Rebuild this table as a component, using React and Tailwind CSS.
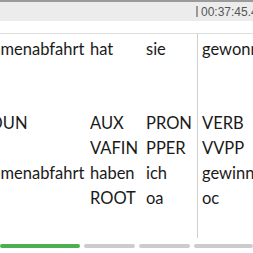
export default function App() {
  const rows = [
    [["Damenabfahrt", "ml-[-20px]"], "hat", "sie", "gewonnen"],
    [["", ""], "", "", ""],
    [["", ""], "", "", ""],
    [["NOUN", "ml-[-23px]"], "AUX", "PRON", "VERB"],
    [["NN", "ml-[-26px]"], "VAFIN", "PPER", "VVPP"],
    [["Damenabfahrt", "ml-[-20px]"], "haben", "ich", "gewinnen"],
    [["sb", "ml-[-18px]"], "ROOT", "oa", "oc"],
  ];
  return (
    <div className="w-[253px] h-[253px] overflow-hidden bg-white relative" style={{ fontFamily: "Lato, 'Noto Sans', sans-serif" }}>
      <div className="h-[2px] bg-[#9b9b9b]" />
      <div className="h-[19px] bg-[#ececec] flex items-center">
        <div className="ml-[196px] flex items-center">
          <div className="w-[2px] h-[11px] bg-[#9a9a9a]" />
          <span className="ml-[3px] text-[12px] leading-none text-[#555] whitespace-nowrap" style={{ fontFamily: "'Liberation Sans', Arial, sans-serif" }}>00:37:45.4</span>
        </div>
      </div>
      <div className="h-[12px]" />
      <div className="h-[1px] bg-[#dedede]" />
      <div className="relative h-[204px]">
        <div className="absolute left-[197px] top-0 bottom-0 w-[1px] bg-[#cfcfcf]" />
        <div className="pt-[3px]">
          {rows.map((r, i) => (
            <div key={i} className="flex h-[24.8px] items-center text-[16.5px] text-[#1a1a1a] whitespace-nowrap">
              <div className="w-[90px] shrink-0 overflow-hidden">
                <div className={r[0][1]}>{r[0][0] || "\u00a0"}</div>
              </div>
              <div className="w-[56px] shrink-0">{r[1]}</div>
              <div className="w-[56px] shrink-0">{r[2]}</div>
              <div className="shrink-0">{r[3]}</div>
            </div>
          ))}
        </div>
      </div>
      <div className="mt-[6px] flex gap-[4px] h-[4px]">
        <div className="w-[81px] rounded-full bg-[#4caf50]" />
        <div className="w-[52px] rounded-full bg-[#cccccc]" />
        <div className="w-[52px] rounded-full bg-[#cccccc]" />
        <div className="w-[60px] rounded-full bg-[#cccccc]" />
      </div>
    </div>
  );
}
